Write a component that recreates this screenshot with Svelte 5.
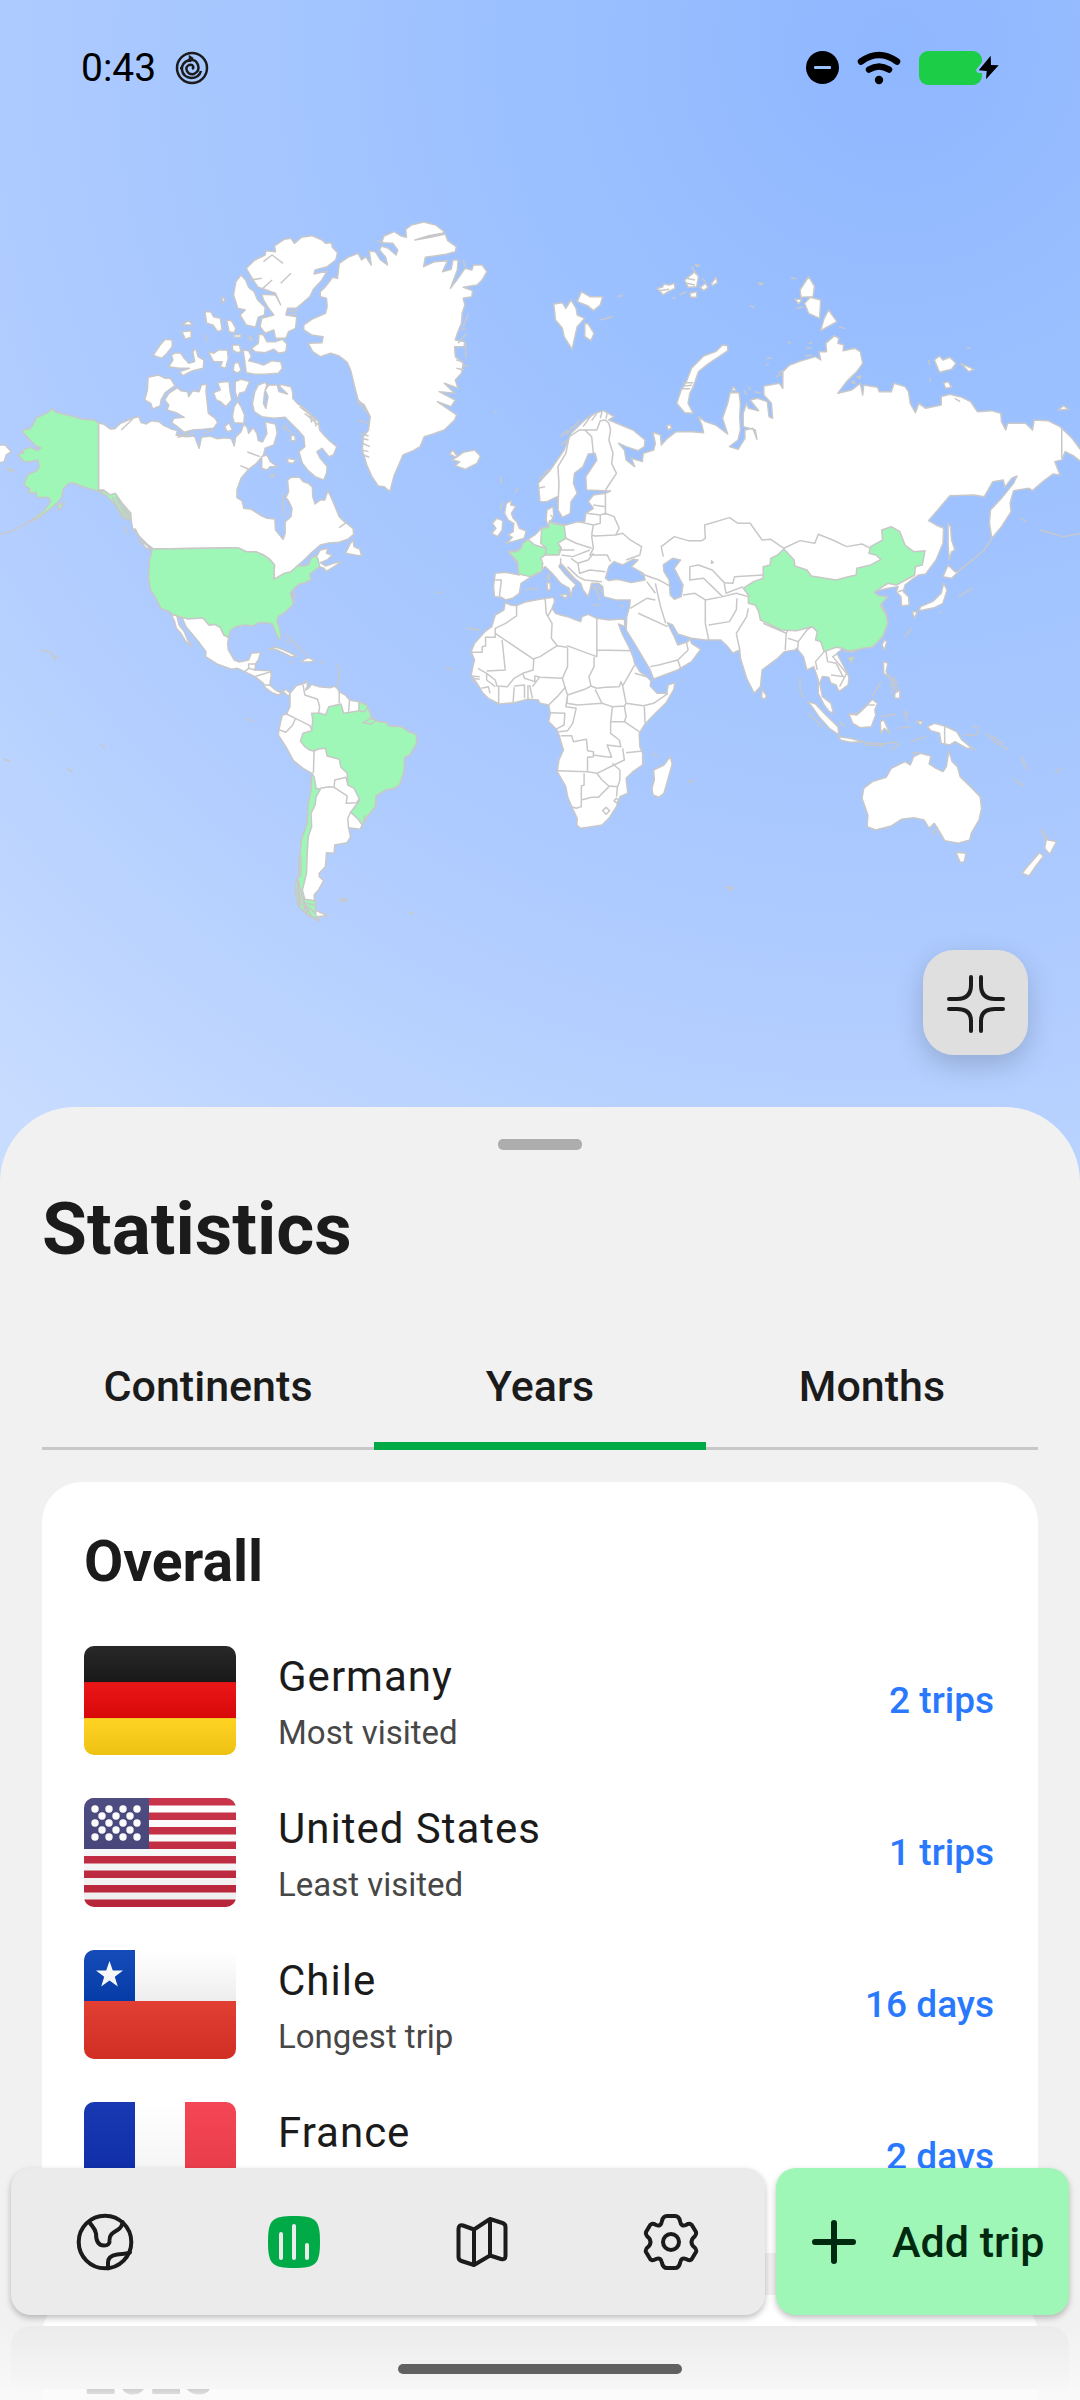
<script>
	const tabs = ['Continents', 'Years', 'Months'];
	let activeTab = 'Years';

	const overall = [
		{ code: 'de', country: 'Germany', label: 'Most visited', value: '2 trips' },
		{ code: 'us', country: 'United States', label: 'Least visited', value: '1 trips' },
		{ code: 'cl', country: 'Chile', label: 'Longest trip', value: '16 days' },
		{ code: 'fr', country: 'France', label: 'Shortest trip', value: '2 days' }
	];

	const usStars = [];
	for (let row = 0; row < 5; row++) {
		for (let col = 0; col < (row % 2 ? 3 : 4); col++) {
			usStars.push({ x: 11 + col * 14 + (row % 2 ? 7 : 0), y: 11 + row * 7 });
		}
	}

	// The map is split in four sheets, each with its own origin
	const sheets = [
		{
			x: 0, y: 0,
			land: [
				// Canada
				'M286 669L300 672 320 687 333 686 350 670 385 655 403 650 410 668 425 672 440 662 462 665 475 676 500 688 515 692 512 705 540 710 565 708 578 745 585 712 610 708 630 716 655 713 672 716 680 738 684 712 700 695 708 672 718 683 722 700 735 683 746 700 750 722 762 726 775 700 770 665 800 672 805 700 795 735 770 745 765 765 745 790 722 808 700 835 688 870 688 893 703 903 708 925 730 928 755 945 775 955 798 957 800 990 822 1018 828 1000 828 965 845 950 848 925 838 903 830 893 838 875 835 840 845 832 870 832 880 845 895 850 907 862 908 890 915 912 930 900 943 900 952 872 962 893 975 925 985 950 1000 965 1025 985 1027 1003 1010 1018 985 1027 955 1029 930 1035 905 1058 885 1078 863 1098 885 1098 897 1090 905 1075 920 1068 930 1050 952 1045 948 1060 965 1065 950 1080 930 1088 945 1098 975 1088 990 1085 970 1100 948 1114 940 1105 928 1100 885 1105 845 1120 795 1138 797 1095 783 1078 765 1065 742 1055 715 1055 690 1043 445 1047 430 1035 405 1010 385 985 378 945 345 905 320 885 300 870 286 869Z',
				// Arctic islands
				'M715 205L740 180 770 165 772 152 800 155 797 138 825 118 845 115 855 130 875 112 905 107 935 120 945 130 962 128 965 142 980 158 975 180 950 200 915 210 912 222 950 213 935 240 910 268 900 290 875 312 860 325 835 325 830 345 862 350 858 385 838 395 830 415 800 415 795 390 770 400 755 380 760 355 795 345 780 325 765 300 760 283 800 285 815 315 800 280 750 262 735 240Z',
				'M700 225L713 240 722 262 738 275 748 300 770 322 768 345 750 352 742 382 715 375 697 345 712 330 690 325 683 300 678 285 685 245Z',
				'M752 402L765 405 775 425 800 425 820 418 833 432 830 455 810 460 795 448 770 458 740 455 730 445 750 430Z',
				'M706 450L722 452 730 470 722 482 745 488 765 495 790 482 815 485 820 505 808 520 770 523 740 523 715 518Z',
				'M478 600L490 580 515 563 525 572 545 575 548 590 560 572 578 575 585 555 600 552 598 575 605 640 625 655 632 668 620 685 590 688 560 690 535 697 515 680 498 668 505 655 535 652 515 640 485 630 490 615Z',
				'M430 532L460 525 480 535 495 535 508 557 480 578 468 600 465 618 443 627 438 610 420 600 428 570Z',
				'M620 578L640 570 632 548 650 545 665 545 668 575 673 600 655 620 640 605 628 600Z',
				'M683 545L700 538 725 545 712 575 695 580 690 600 683 575Z',
				'M680 620L690 605 700 620 710 645 708 670 680 668 675 650Z',
				'M740 575L750 555 770 547 775 555 768 580 765 610 772 625 778 590 770 570 780 555 805 555 810 575 835 582 812 560 815 553 845 560 850 578 850 595 865 612 885 625 905 645 925 665 928 690 945 710 960 725 978 740 968 765 955 770 935 745 920 755 930 775 950 800 948 820 940 840 915 830 895 812 878 790 868 755 885 740 882 710 865 690 845 670 828 652 795 655 760 650 738 635 733 610Z',
				'M490 500L502 480 498 465 510 458 525 460 535 475 548 490 565 485 560 455 568 445 575 470 592 480 590 505 560 512 530 527 522 515 550 505 520 505Z',
				'M445 465L465 435 480 418 500 420 500 440 485 460 470 475 455 470Z',
				'M605 455L620 460 635 450 660 450 663 475 655 505 640 500 645 485 620 485Z',
				'M680 490L692 487 700 510 690 520 677 512Z M675 435L695 435 700 455 688 458 675 450Z M678 404H700V412H680Z M722 408L732 415 728 424Z',
				'M595 335L612 335 620 350 640 355 645 390 632 395 618 375 600 370Z M658 360L672 362 685 385 680 398 665 395Z',
				'M528 375L548 362 560 375Z M528 395L555 392 555 412 538 418Z M594 405L604 425Z M643 292L654 296 648 310Z',
				'M760 770L775 765 785 785 805 800 785 800 775 810 760 805Z M845 705L857 708 857 722 845 722Z M835 775L860 780 850 790 836 788Z M652 680L665 668 675 690 660 695Z M785 826L798 822 790 832Z',
				'M400 1018L425 1035 440 1050 425 1045Z M1003 1060L1015 1035 1025 1018 1028 1040 1045 1048 1050 1068 1030 1065Z',
				// Greenland
				'M985 190L1010 172 1040 160 1050 180 1062 170 1078 195 1072 152 1090 155 1105 180 1125 195 1120 172 1102 150 1108 138 1128 145 1150 165 1155 150 1140 130 1108 128 1115 108 1145 95 1165 108 1180 112 1178 88 1195 75 1230 66 1265 75 1290 95 1285 100 1245 107 1205 120 1250 112 1293 102 1300 122 1325 140 1322 155 1295 163 1235 172 1230 200 1262 185 1300 182 1285 215 1310 208 1315 180 1330 180 1328 210 1308 265 1330 235 1350 205 1370 210 1375 195 1400 195 1414 215 1400 240 1385 255 1345 262 1372 272 1370 290 1345 295 1350 315 1342 340 1340 370 1328 400 1322 420 1350 425 1347 440 1320 440 1322 470 1345 490 1340 520 1322 540 1330 565 1290 550 1320 580 1275 575 1322 600 1310 620 1270 605 1326 645 1320 660 1290 690 1255 703 1232 710 1220 740 1200 752 1170 765 1160 790 1145 825 1132 875 1115 860 1098 858 1080 830 1065 795 1052 750 1055 710 1070 690 1075 650 1060 620 1040 600 1032 570 1025 540 1018 510 1008 487 985 468 960 460 930 470 908 455 895 430 935 428 938 410 905 405 882 390 882 375 905 358 945 340 950 320 948 295 930 290 930 275 945 260 960 240 965 232 980 235Z',
				// Iceland, British Isles
				'M1305 762L1315 750 1328 770 1345 757 1378 750 1395 768 1385 790 1350 808 1322 797 1335 785 1312 780 1325 772Z',
				'M1470 910L1485 902 1483 915 1498 918 1485 940 1490 955 1500 965 1508 985 1528 993 1522 1015 1498 1022 1470 1030 1488 1012 1475 1005 1490 995 1492 970 1475 960 1465 940Z',
				'M1430 970L1442 955 1460 962 1458 990 1445 1010 1428 1000 1440 985Z',
				'M-5 735L15 735 33 755 18 765 12 785 -5 790Z'
			],
			visited: [
				// Alaska
				'M286 669L272 659 240 658 215 650 187 643 163 637 150 626 143 635 122 646 106 653 96 674 86 687 67 689 66 697 85 718 104 738 119 744 108 751 87 742 62 752 69 758 52 764 69 784 86 785 110 780 114 800 106 813 82 822 74 840 70 855 88 868 80 876 97 880 104 876 108 893 125 892 143 893 147 905 130 930 100 955 85 965 105 958 125 943 148 925 170 905 180 890 183 868 200 850 215 850 235 858 255 865 286 874 300 873 320 885 335 880 355 910 380 940 380 960 355 950 335 915 310 888 286 874Z',
				'M18 805L42 812 30 812Z M168 915L188 908 170 932Z'
			],
			lines: 'M0 1003L30 995 60 980 85 965 M325 890L355 955 M335 890L372 962 M345 900L378 958 M330 900L365 960 M340 895L380 950 M358 978L372 1002 M385 985L412 1020 M392 985L405 1012 M1042 610L1068 640 M1040 660L1066 670 M1035 605L1060 615 M1045 700L1070 708 M1050 715L1070 720 M1052 730L1074 740 M1050 750L1070 755 M1055 765L1072 772 M1345 180L1350 200 M1360 340L1345 380 M1340 390L1352 385 M1355 400L1330 430 M1352 430V475 M1325 480L1345 485 M1325 505L1348 510 M1345 495L1362 500 M1436 636L1442 630 M1455 832V850 M1505 862L1496 878 M1460 905L1452 930 M725 240L760 235 M760 268L790 240 M765 185L790 165 822 190 M815 250L845 220 M510 705L565 700 M515 712L545 706 M590 700L620 690 M870 620L888 634 M880 625L915 660 M885 640L925 675 M900 640L905 668 M912 650L918 680 M718 756L755 770 M698 797L722 808 M985 983L1005 968 M820 680L850 700 M830 670L828 690 M820 880L825 950 M1095 122L1115 128 M835 335L865 330 M838 345L862 340 M800 20M352 690L385 658'
		},
		{
			x: 540, y: 0,
			land: [
				// Europe and Asia, with the Black and Caspian seas cut out
				'M130 660L160 640 185 632 215 650 200 660 235 675 270 690 305 720 303 740 285 752 250 740 228 730 245 750 250 780 275 800 265 775 297 785 300 760 330 750 335 730 328 697 350 705 352 735 370 715 395 695 440 695 475 698 470 675 460 650 480 665 510 675 545 702 530 655 545 610 552 578 578 578 582 610 580 650 582 690 575 720 550 740 575 748 595 715 595 690 618 685 630 718 625 690 590 680 590 640 600 610 605 625 635 632 610 600 632 595 660 605 665 650 675 655 672 610 650 585 650 558 695 550 705 565 705 515 725 495 760 482 800 470 815 480 810 455 832 455 830 430 855 407 868 415 865 430 882 435 880 452 915 445 930 455 937 490 920 515 890 545 865 580 905 570 930 550 937 585 940 555 980 562 985 575 1020 575 1028 550 1060 560 1070 575 1075 610 1090 638 1100 610 1120 625 1165 615 1165 590 1190 583 1225 592 1250 605 1270 635 1310 632 1338 640 1340 665 1352 690 1358 670 1410 670 1430 690 1435 660 1475 662 1510 680 1545 715 1570 750 1570 785 1550 768 1525 755 1515 780 1495 785 1510 825 1490 822 1460 845 1430 872 1420 865 1375 872 1365 910 1368 935 1340 980 1312 1015 1305 970 1308 930 1340 895 1375 850 1385 828 1370 835 1350 862 1345 840 1315 845 1290 890 1260 885 1190 887 1155 930 1128 962 1150 975 1172 985 1170 1030 1150 1080 1120 1122 1100 1125 1078 1140 1060 1155 1055 1175 1070 1190 1072 1215 1050 1218 1048 1190 1035 1175 1040 1160 1010 1165 970 1175 985 1190 1010 1190 990 1210 1005 1240 1010 1270 995 1310 965 1340 935 1345 905 1355 880 1345 862 1360 880 1395 897 1430 895 1455 868 1475 860 1455 845 1450 838 1432 820 1430 812 1450 820 1490 845 1510 852 1540 840 1535 825 1515 808 1480 808 1440 795 1400 775 1410 765 1370 745 1345 740 1350 710 1355 690 1375 645 1410 640 1460 622 1480 600 1435 582 1375 580 1350 560 1360 545 1340 525 1320 480 1320 440 1315 400 1302 385 1275 370 1268 380 1290 390 1310 400 1335 430 1325 435 1315 440 1330 467 1348 440 1385 400 1410 330 1437 320 1410 280 1340 250 1290 252 1250 260 1220 262 1200 220 1200 185 1190 182 1160 170 1150 150 1150 140 1190 125 1170 118 1150 100 1135 80 1112 60 1090 55 1100 75 1125 105 1155 95 1165 90 1190 85 1165 60 1150 35 1120 15 1100 -5 1120 -25 1130 -55 1150 -60 1180 -80 1195 -100 1200 -112 1192 -132 1190 -135 1160 -130 1120 -100 1117 -60 1125 -65 1090 -93 1055 -68 1052 -55 1045 -50 1030 -35 1018 -15 1005 5 985 25 980 18 960 20 930 38 920 40 950 30 965 55 972 75 975 110 965 130 965 133 940 155 925 140 905 155 885 190 880 205 873 135 870 133 830 165 780 160 760 140 762 125 800 100 820 97 850 108 880 90 905 88 940 65 952 52 930 50 890 20 905 0 905 -5 850 30 810 70 750 90 700Z M190 1135L200 1100 215 1085 240 1095 270 1078 285 1080 265 1100 300 1120 305 1140 265 1148 225 1138 200 1142Z M358 1095L385 1075 408 1080 390 1105 405 1135 415 1155 410 1190 390 1198 378 1185 375 1140 360 1115Z',
				'M545 437L545 452 520 470 490 490 460 515 445 560 435 580 430 610 445 640 420 638 397 610 410 570 425 545 440 505 475 468 510 455 530 435Z',
				'M40 312L65 308 75 325 90 300 105 325 108 345 130 355 108 380 93 448 70 410 65 385 45 360Z',
				'M108 305L120 275 145 290 182 290 175 315 155 332 140 318Z M130 370L140 372 157 400 148 422 130 410Z',
				'M755 270L780 230 797 258 793 290 758 292Z M768 310L785 292 815 300 812 355 780 340Z M838 330L862 365 815 392 825 355Z M740 298H760L752 312Z',
				'M340 265L355 262 360 252 375 255 390 250 392 265 372 275 358 285Z M420 240L450 215 460 230 455 260 430 262Z M465 262L480 250 488 262 475 272Z M498 250L512 232 515 248 500 258Z M435 280L455 275 455 292 438 292Z M451 194L463 196 456 200Z M635 249L647 250 640 255Z M730 234L743 236Z',
				'M1145 480L1160 468 1170 480 1190 472 1208 490 1195 508 1160 517Z M1222 490L1260 508 1245 515Z M1172 550L1185 545 1195 562 1178 565Z M1505 630L1520 617 1535 628Z',
				'M368 678L378 674 382 684 372 690Z M556 572L562 560 570 572Z M905 548L912 542 914 550Z M920 530L932 528 928 536Z',
				'M1185 970L1192 980 1195 1020 1205 1050 1195 1055 1188 1080 1185 1030Z',
				'M20 1150L28 1150 27 1170 21 1168Z M58 1185L80 1183 76 1195Z'
			],
			visited: [
				'M5 985L25 982 28 962 40 972 70 975 75 1015 52 1030 62 1045 55 1065 15 1065 18 1045 2 1030Z',
				'M-93 1055L-68 1055 -55 1045 -50 1030 -35 1018 -15 1035 18 1045 15 1065 2 1075 8 1090 5 1115 -8 1120 -28 1130 -62 1122 -65 1085Z',
				'M23 1125L27 1122 27 1140 23 1138Z'
			],
			lines: 'M52 930L55 850 52 800 75 760 85 710 115 690 130 690 150 710 155 760 M130 690L165 690 175 662 190 660 200 670 205 690 200 720 212 760 208 790 222 820 190 870 M190 880V945 M155 915L190 920 M135 940L175 945 190 940 215 950 230 985 220 1005 160 1008 150 1005 155 975 175 970 175 945 M110 965L155 975 M220 1005L240 1000 262 1020 295 1040 290 1065 250 1080 M150 1008L155 1045 145 1065 195 1065 205 1085 M75 1015L105 1030 150 1045 M52 1050H100 M62 1065L95 1070 145 1050 M90 1075L110 1090 140 1080 155 1060 M110 1090L115 1120 145 1110 190 1115 M60 1075V1095 M80 1100L110 1130 130 1140 180 1145 M358 1070L352 1040 390 1010 430 1022 470 1022 480 1015 478 975 550 953 575 970 610 970 645 1020 670 1018 708 1045 755 1022 798 1030 808 1003 850 1020 890 1040 935 1032 960 1045 M648 1125L565 1130 560 1150 535 1148 500 1110 460 1095 435 1100V1140L475 1135 530 1190 M415 1185L450 1180 480 1200V1270L490 1320 M480 1200L530 1190 570 1180 605 1190 M490 1275L550 1265 570 1230 572 1195 M605 1225L600 1250 570 1300 580 1350 M535 1150L540 1180 590 1160 M335 1150L350 1220 365 1270 M262 1225L310 1195 335 1200 M285 1240L370 1280 M320 1400L345 1395 400 1380 430 1350 425 1325 M400 1380L410 1410 M290 1120L345 1140 380 1160 M310 1145L335 1180 M648 1270L715 1300 720 1290H750 M715 1300L712 1350 M720 1315L750 1325 748 1350 M750 1325L775 1290 790 1280 M825 1355L800 1385 805 1410 M830 1350L835 1385 860 1390 880 1430 845 1425 M865 1360L850 1370 890 1420 870 1460 M-130 1140L-112 1140 -118 1190 M1515 685V775 M1312 1015L1290 1050 1250 1085 1212 1115 M1395 955L1412 965 M1450 990L1520 1010 1570 1000 M80 690L60 710 M95 680L75 705 M115 660L95 685 M150 645L125 680 M165 640L150 662 M180 636L175 655 M195 638L192 656 M60 735L78 722 M10 820L28 808 M-5 835L15 825 M-5 865L15 860 M690 520L705 512 M685 530L702 524 M658 475H672 M656 495L664 492 M780 430H790 M775 445H788 M770 468L790 466 M720 425L728 430 M745 325L765 320 M868 380L885 386 M225 290L240 286 M175 360L210 350 M610 318L622 322 M470 235L480 245 M440 200L455 225 M425 235L450 240 M425 250L450 255 M405 285L425 275 M385 290L392 298 M345 272L375 268 M415 548L445 548 M418 558L442 556 M408 566L436 566 M592 570L600 585 M605 560L612 570 M622 575L640 580 M1130 480V495 M1130 535L1134 545 M1240 445H1250 M1205 595L1220 605 M160 1160L175 1200 M155 1215H175 M150 1155L170 1180 M165 1155L182 1178 M230 1218H243 M-5 1170L-18 1165 M65 1095L100 1140 M30 945L42 955 M498 1082L503 1088 498 1090Z'
		},
		{
			x: 0, y: 360,
			land: [
				// Mexico and Central America
				'M497 163L520 168 545 176 590 174 607 195 625 193 640 203 650 225 664 232 661 250 663 270 680 300 695 306 722 300 730 280 757 277 750 300 742 312 740 330 785 332 788 345 783 375 800 390 815 398 830 388 842 400 838 410 825 397 808 405 790 398 770 383 765 370 740 350 710 335 690 325 672 328 630 312 597 290 598 275 580 250 560 225 540 200 528 172 514 170 520 195 535 215 545 240 558 260 540 245 525 220 512 205 507 185Z',
				'M780 268L800 261 825 270 862 288 845 290 820 277 800 268Z M880 300L895 293 915 302 900 306 878 305Z M930 306H942',
				// South America
				'M842 400L860 377 885 370 890 360 893 378 887 390 895 385 905 373 925 380 960 383 975 378 985 395 1003 405 1015 420 1042 425 1065 435 1075 460 1078 475 1100 485 1120 487 1130 498 1165 500 1190 517 1208 523 1210 550 1190 585 1175 592 1173 635 1160 675 1145 685 1120 690 1092 708 1090 740 1070 765 1052 795 1045 808 1012 803 1018 830 1008 848 972 855 970 880 948 878 945 920 927 940 927 950 940 962 925 990 912 1005 915 1050 950 1067 920 1070 925 1080 895 1065 868 1040 860 1010 858 970 868 950 870 900 875 840 892 790 895 730 903 690 905 640 880 625 852 602 830 560 808 525 810 510 815 485 820 465 832 462 842 440Z'
			],
			visited: [
				// United States
				'M440 -33H445L690 -37 715 -25 742 -25 765 -15 783 -2 797 15 795 58 825 40 845 35 863 18 885 18 897 12 905 -8 915 -12 923 -5 928 20 915 30 900 42 903 60 885 68 868 73 855 85 843 100 850 120 850 135 830 155 808 170 804 185 812 205 816 233 810 238 800 215 792 193 775 188 750 188 735 198 710 195 685 200 668 213 664 232 650 225 640 203 625 193 607 195 590 174 545 176 520 170 500 163 492 155 467 145 460 130 447 105 437 90 431 52 434 0 440 -20Z',
				'M155 290L165 292 160 298Z',
				// Brazil
				'M905 460L930 460 945 465 955 440 990 432 998 460 1042 452 1042 425 1065 435 1075 460 1078 475 1100 485 1120 487 1130 498 1165 500 1190 517 1208 523 1210 550 1190 585 1175 592 1173 635 1160 675 1145 685 1120 690 1092 708 1090 740 1070 765 1052 795 1040 778 1018 757 1045 720 1028 685 1010 675 1008 640 990 622 985 598 950 588 945 565 925 567 912 573 898 570 885 560 872 543 880 520 905 512 908 480Z',
				// Chile
				'M905 640L912 650 918 685 930 688 918 710 915 735 903 760 905 800 895 830 892 880 890 940 878 990 885 1018 915 1022 917 1068 920 1070 925 1080 895 1065 868 1040 860 1010 858 970 868 950 870 900 875 840 892 790 895 730 903 690Z'
			],
			lines: 'M880 375L885 405 922 418 928 440 925 460 M832 462L858 475 900 497 905 510 M858 475L850 495 830 517 812 510 M912 573L910 640 M985 395V430 M1015 420L1012 455 M930 685L955 680 970 682 972 660 1005 652 1010 675 M970 682L1008 708 1005 730 1035 728 1045 715 M1018 757L1010 775 1012 803 M722 325V312H742 M710 335L722 325 742 330 M740 350L755 345 787 335 M768 375H783 M1042 452L1058 455 1070 440 M1055 488L1075 475 1092 480 1080 492Z M118 270L130 272 150 280 160 292 M830 222L850 245 875 270 890 285 M832 240L840 250 M975 310L985 330 985 360 975 385 M835 307H848 M715 478L735 482 M985 1018L1010 1018 995 1026Z M1185 1055L1202 1063 M868 890V950 M874 890V950 M862 960L875 1040 M866 960L885 1050 M870 985L895 1055 M862 985L870 1035 M874 1000L892 1060 M878 1020L905 1070 M884 1025L900 1062 M895 1040L915 1060 M890 1030L912 1035 M885 1060L930 1083 M848 90L860 110 M846 110L856 130 M852 88L852 130 M1265 96L1280 98 M1355 205L1395 210 M1295 320L1312 330 M10 598L30 603 M195 626L212 636 M292 553L305 566 M140 457H144 M560 727V729 M1525 90L1548 84 M1060 765L1055 790 M1368 345L1390 350 M1370 350L1395 356 M1370 362L1385 366'
		},
		{
			x: 540, y: 360,
			land: [
				// Africa
				'M-101 128L-85 135 -68 137 -40 125 0 118 20 115 40 112 42 125 35 145 45 160 60 165 80 170 105 180 118 185 122 170 140 163 165 175 200 180 225 178 245 178 247 200 228 192 240 225 258 260 270 290 275 310 290 335 310 350 322 362 320 378 340 400 368 400 372 375 392 368 388 390 365 430 335 460 305 492 288 520 290 560 298 580 298 615 270 635 250 655 255 700 232 710 222 740 200 775 180 795 150 800 118 805 107 795 108 775 92 740 80 710 75 680 50 635 55 600 68 570 55 525 50 510 25 485 30 460 25 435 0 430 -5 420 -35 418 -75 428 -118 432 -150 415 -165 400 -180 375 -200 345 -195 320 -190 300 -200 275 -190 250 -160 215 -140 200 -130 165 -105 150Z',
				'M378 590L384 612 375 645 360 700 345 712 328 705 325 685 332 660 330 630 360 615Z',
				// Japan, Taiwan, Philippines, Sri Lanka
				'M1185 15L1205 35 1215 35 1195 55 1170 50Z M1172 70L1182 90 1170 130 1145 143 1100 152 1105 140 1140 125 1165 100Z M1080 155L1095 155 1088 175Z',
				'M1000 240L1007 245 1000 270 993 255Z M997 305L1010 310 1005 335 1012 350 998 340Z M1030 400L1045 390 1045 415 1030 415Z M645 388L658 408 652 418 643 412Z',
				// Indonesia and New Guinea
				'M778 425L800 432 830 465 865 500 868 525 840 505 810 470 790 440Z M868 530L900 535 940 545 900 547 872 540Z',
				'M897 462L920 465 945 440 965 418 980 430 972 450 975 465 962 500 930 503 908 490Z M988 485L998 480 1005 495 1015 520 1000 505 990 520Z M1092 482L1112 485 1105 495Z',
				'M1125 500L1145 490 1175 498 1210 515 1225 540 1255 565 1240 565 1205 545 1190 555 1165 550 1160 520 1135 512Z',
				// Australia, New Zealand
				'M1187 573L1197 605 1212 620 1220 650 1250 680 1278 710 1282 745 1275 780 1252 820 1248 840 1215 850 1175 842 1160 815 1145 790 1130 805 1115 780 1085 773 1050 778 1020 798 975 810 950 800 952 765 935 715 940 685 965 665 1005 652 1020 625 1060 605 1075 615 1085 590 1105 580 1135 588 1130 612 1150 625 1170 635 1180 620Z',
				'M1208 877L1237 880 1232 905 1220 908Z M1455 808L1475 840 1500 845 1480 883 1465 865 1470 840Z M1450 878L1462 888 1435 925 1420 948 1400 940 1415 920Z',
				'M20 68L30 68 30 88 22 92Z'
			],
			visited: [
				// China
				'M648 20L668 15 670 -5 690 -15 708 -33 738 0 740 18 775 30 788 48 860 60 895 50 918 45 920 25 960 15 990 -2 975 -15 955 -20 960 -40 995 -60 992 -90 1020 -100 1045 -85 1060 -45 1085 -25 1118 -28 1110 15 1090 20 1088 45 1035 75 1010 70 970 97 985 107 1010 110 988 135 1005 165 1010 190 995 230 965 262 935 265 905 277 878 265 860 262 825 275 815 245 800 240 805 215 790 200 745 212 700 210 640 180 635 155 625 135 605 130 605 105 590 85 620 65 648 55Z',
				'M895 293L912 292 903 307Z'
			],
			lines: 'M-200 277L-168 277V260L-158 258V232H-130V205L-100 190 -68 168V137 M-130 220L-20 297 0 290 50 257 78 262 M-110 240L-101 330 -155 333 M-18 298L-20 330 -50 340 -75 355 -95 380 -125 378 -130 360 -155 340 -180 325 M-50 340L-45 355 -15 365V348L0 352 65 355 80 320V262 M15 115L18 160 35 190 33 235 50 257 M35 145L22 170 M165 175V290L78 257 M157 290V320L142 350 148 378 130 388 80 405 72 380 65 355 M165 270L270 272 M148 378L165 385 190 382 230 380 235 365 240 378 250 360 275 315 M275 340L310 350 M240 378L250 430 300 437 330 430 372 400 M160 388L180 430 210 440 245 438 250 430 M80 405L78 430 110 435 180 430 M80 405L75 440 105 445 95 490 80 512 55 515 M30 458L72 460 70 495 45 508 M60 527H92L97 545 135 538 138 572 155 575V590L138 592V635L50 632 M155 585L190 590 208 592 195 555 235 560 230 540 205 520V490L210 440 M205 485H245L250 470 245 438 M245 485L288 515 M303 440L305 490 M240 565L245 600 215 615 210 610 M250 578L298 573 M138 635L165 640 215 615 232 630V660L225 680 200 678 180 660 165 640 M128 640V675L120 678V740L105 745 92 740 M120 720L150 712 170 712 200 680 M225 680L222 710 M182 752L192 742 202 752 192 763Z M215 722L222 715 229 722 222 729Z M-75 382L-78 428 M-75 378L-45 375V415 M-35 375V418 M-30 375L-22 415 M-22 380L0 350 M-120 380V432 M-155 340V360L-130 380 M25 435L50 410 75 380 M-170 385L-150 380 -145 400 M-200 348L-175 350 M-198 355L-175 358 M1175 498V553 M900 462L925 460 950 435 972 435 M1040 95L1062 88 M940 548L1000 552 1040 545 M945 555L1000 558 M1015 572L1045 552 M990 470L1035 463 M1060 450L1065 485 M1055 462L1072 460 M1040 505L1075 500 M1075 545L1120 530 M755 350V390L765 415 M780 460L820 502 M965 410L990 365 M1010 345L1040 370 M1012 355L1042 385 M1015 370L1040 395 M1030 350L1020 400 M1230 525L1265 525 1278 510 M1255 498L1275 505 M1255 565L1265 570 M1295 520L1320 545 1360 570 M1310 525L1345 552 M1398 590L1415 630 M1400 610L1410 612 M1375 658L1405 678 M1495 638L1515 625 M1060 230L1080 205 M1215 110L1255 85 M325 580L342 590 M430 668L448 660 M545 980L560 985 550 990Z M1140 820L1155 800 M1140 812L1150 825 M1080 578H1100 M870 485L885 500 M412 360L420 360 M880 275L930 268 M1160 155L1165 158'
		}
	];
</script>

<div class="app">
	<header class="status-bar">
		<span class="clock">0:43</span>
		<svg class="spiral" width="34" height="34" viewBox="0 0 34 34">
			<circle cx="17" cy="17" r="15" />
			<path d="M17 18q2-1 1-3t-4-1q-4 2-2 6t7 3q6-3 4-9t-9-5q-8 3-7 10t9 8q8 0 10-7M8 17h-3M15 11V6l3 2" />
		</svg>
		<div class="status-icons">
			<svg class="dnd" width="33" height="33" viewBox="0 0 33 33">
				<circle cx="16.500" cy="16.500" r="16.500" />
				<rect x="8" y="15" width="17" height="3" rx="1" />
			</svg>
			<svg class="wifi" width="44" height="34" viewBox="0 0 44 34">
				<path d="M4 10.500Q22-2.500 40 10.500M12 18.500Q22 12.500 32 18.500" />
				<circle cx="22" cy="29" r="4.200" />
			</svg>
			<svg class="battery" width="82" height="34" viewBox="0 0 82 34">
				<rect width="63" height="34" rx="9" />
				<path d="M71.700 4.700L59.700 19.300 67.700 20 67 28.300 79.700 14.300 72 14Z" />
			</svg>
		</div>
	</header>

	<svg class="world" viewBox="0 0 1080 740" role="img" aria-label="World map">
		{#each sheets as sheet}
			<g transform="translate({sheet.x} {sheet.y}) scale(0.3444 0.3333)">
				{#each sheet.land as d}
					<path {d} />
				{/each}
				{#each sheet.visited as d}
					<path class="visited" {d} />
				{/each}
				<path class="border" d={sheet.lines} />
			</g>
		{/each}
	</svg>

	<div class="map-tools">
		<button class="collapse" aria-label="Collapse map">
			<svg width="60" height="60" viewBox="0 0 60 60">
				<path d="M25 4v8q0 14-14 14H3M35 4v8q0 14 14 14h8M25 58V48q0-12-14-12H3M35 58V48q0-12 14-12h8" />
			</svg>
		</button>
	</div>

	<main class="sheet">
		<div class="handle"></div>
		<h1>Statistics</h1>

		<div class="tabs" role="tablist">
			{#each tabs as tab}
				<button
					class="tab"
					class:active={tab === activeTab}
					role="tab"
					aria-selected={tab === activeTab}
					on:click={() => (activeTab = tab)}
				>{tab}</button>
			{/each}
		</div>

		<section class="card">
			<h2>Overall</h2>
			<ul>
				{#each overall as item}
					<li>
						<svg class="flag" width="152" height="109" viewBox="0 0 152 109">
							<defs>
								<linearGradient id="shade-{item.code}" x2="0" y2="1">
									<stop offset="0" stop-color="#fff" stop-opacity=".06" />
									<stop offset="1" stop-color="#000" stop-opacity=".07" />
								</linearGradient>
							</defs>
							{#if item.code === 'de'}
								<rect width="152" height="36" fill="#1a1a1a" />
								<rect y="36" width="152" height="36" fill="#e80808" />
								<rect y="72" width="152" height="37" fill="#ffd014" />
								{#each [0, 36, 72] as y}
									<rect {y} width="152" height="37" fill="url(#shade-de)" />
								{/each}
							{:else if item.code === 'us'}
								<rect width="152" height="109" fill="#fff" />
								{#each [0, 1, 2, 3, 4, 5, 6, 7] as stripe}
									<rect y={stripe * 14.5} width="152" height="7.500" fill="#c5283f" />
								{/each}
								<rect width="65" height="51" fill="#42427a" />
								{#each usStars as star}
									<circle cx={star.x} cy={star.y} r="3.700" fill="#fff" />
								{/each}
								<rect width="152" height="109" fill="url(#shade-us)" />
							{:else if item.code === 'cl'}
								<rect width="152" height="51" fill="#fff" />
								<rect width="51" height="51" fill="#0640b4" />
								<rect y="51" width="152" height="58" fill="#e03226" />
								<path d="M25.500 11l3.300 9.600h10.200l-8.200 6.100 3 9.800-8.300-5.900-8.300 5.900 3-9.800-8.200-6.100h10.200z" fill="#fff" />
								<rect width="152" height="51" fill="url(#shade-cl)" />
								<rect y="51" width="152" height="58" fill="url(#shade-cl)" />
							{:else}
								<rect width="51" height="109" fill="#0a2cae" />
								<rect x="51" width="51" height="109" fill="#fff" />
								<rect x="101" width="51" height="109" fill="#f33a4a" />
								<rect width="152" height="109" fill="url(#shade-fr)" />
							{/if}
						</svg>
						<div class="names">
							<span class="country">{item.country}</span>
							<span class="label">{item.label}</span>
						</div>
						<span class="value">{item.value}</span>
					</li>
				{/each}
			</ul>
		</section>

		<section class="card">
			<h2>2025</h2>
		</section>
	</main>

	<div class="dock">
		<div class="dock-row">
			<nav>
				<a href="#globe" aria-label="Globe">
					<svg width="60" height="60" viewBox="0 0 60 60">
						<circle cx="30" cy="30" r="26.300" />
						<path d="M14 9.500c2 4 6 6 7 12 0 5 1 12 8 12 4 0 6-2 5.500-5-.5-6 4-8 8-10.500 3-2 5-4 5-8M55 40.500c-5 2-8 1-13 2-6 1-9 4-9 8v6" />
					</svg>
				</a>
				<a href="#statistics" aria-label="Statistics">
					<svg width="60" height="60" viewBox="0 0 60 60">
						<path class="tile" d="M30 4c22 0 26 4 26 26s-4 26-26 26S4 52 4 30 8 4 30 4z" />
						<path class="bars" d="M17 22v24M30 14v32M43 33v13" />
					</svg>
				</a>
				<a href="#map" aria-label="Map">
					<svg width="60" height="60" viewBox="0 0 60 60">
						<path d="M22 17.500L11 13.500q-4.500-1-4.500 3.500v28q0 3 3 4l12.500 4 16-9.500 11 3.500q4.500 1 4.500-3V15q0-3-3-4L38 7zM22 17.500V53M38 7v36.500" />
					</svg>
				</a>
				<a href="#settings" aria-label="Settings">
					<svg width="60" height="60" viewBox="-30 -30 60 60">
						<path d="M-4-26H4Q8-26 9-21 10-15 15-17 20-20 22-15L25-10Q26-7 22-4 19 0 22 4 26 7 25 10L22 15Q20 20 15 17 10 15 9 21 8 26 4 26H-4Q-8 26-9 21-10 15-15 17-20 20-22 15L-25 10Q-26 7-22 4-19 0-22-4-26-7-25-10L-22-15Q-20-20-15-17-10-15-9-21-8-26-4-26z" />
						<circle r="8" />
					</svg>
				</a>
			</nav>
			<button class="add">
				<svg width="44" height="44" viewBox="0 0 44 44">
					<path d="M3 22h38M22 3v38" />
				</svg>
				Add trip
			</button>
		</div>
		<div class="dock-base"></div>
	</div>
	<div class="scrim">
		<div class="home"></div>
	</div>
</div>

<style>
	:global(body) {
		margin: 0;
	}

	.app {
		position: relative;
		display: flex;
		flex-direction: column;
		height: 100vh;
		overflow: hidden;
		font-family: Roboto, sans-serif;
		color: #1b1b1b;
		background: radial-gradient(circle at 83% 50px, #8fb7ff 0, #9bc0ff 360px, #aecbff 900px, #bdd5ff 1200px, #c8dcff 1380px);
	}

	h1, h2, ul {
		margin: 0;
		padding: 0;
	}

	button {
		border: none;
		font-family: inherit;
		color: inherit;
		cursor: pointer;
	}

	.status-bar {
		display: flex;
		flex: none;
		align-items: center;
		height: 136px;
		padding: 0 79px 0 81px;
		color: #000;
	}

	.clock {
		font-size: 39px;
	}

	.spiral {
		margin-left: 19px;
		fill: none;
		stroke: #1b1b1b;
		stroke-width: 2.5;
	}

	.status-icons {
		display: flex;
		gap: 18px;
		margin-left: auto;
	}

	.dnd rect {
		fill: #9bc0ff;
	}

	.wifi path {
		fill: none;
		stroke: #000;
		stroke-width: 6.5;
		stroke-linecap: round;
	}

	.battery {
		overflow: visible;
	}

	.battery rect {
		fill: #1ccd47;
	}

	.battery path {
		stroke: #94bbff;
		stroke-width: 5;
		stroke-linejoin: round;
		paint-order: stroke;
	}

	.world {
		flex: none;
		width: 100%;
		margin-top: 64px;
	}

	.world path {
		fill: #fff;
		fill-rule: evenodd;
		stroke: #c8c8c8;
		stroke-width: 1.5;
		stroke-linejoin: round;
		vector-effect: non-scaling-stroke;
	}

	.world .visited {
		fill: #9ef7b6;
	}

	.world .border {
		fill: none;
	}

	.map-tools {
		display: flex;
		flex: none;
		justify-content: flex-end;
		padding: 10px 52px 52px;
	}

	.collapse {
		display: grid;
		place-items: center;
		width: 105px;
		height: 105px;
		padding: 0;
		border-radius: 31px;
		background: #dfdfdf;
		box-shadow: 0 10px 28px rgba(0, 0, 0, .18);
	}

	.collapse path {
		fill: none;
		stroke: #1b1b1b;
		stroke-width: 4;
		stroke-linecap: round;
	}

	.sheet {
		flex: 1;
		min-height: 0;
		padding: 32px 42px 0;
		border-radius: 75px 75px 0 0;
		overflow: hidden;
		background: #f1f1f1;
	}

	.handle {
		width: 84px;
		height: 11px;
		margin: 0 auto;
		border-radius: 5px;
		background: #adadad;
	}

	h1 {
		margin-top: 37px;
		font-size: 73px;
		line-height: 84px;
	}

	.tabs {
		display: grid;
		grid-template-columns: repeat(3, 1fr);
		margin-top: 53px;
		box-shadow: inset 0 -3px #c8c8c8;
	}

	.tab {
		height: 126px;
		padding: 6px 0 0;
		border-bottom: 8px solid transparent;
		background: none;
		font-size: 43px;
		font-weight: 500;
	}

	.tab.active {
		border-color: #00aa46;
	}

	.card {
		margin-top: 32px;
		padding: 43px 42px 42px;
		border-radius: 40px;
		background: #fff;
	}

	.card + .card {
		margin-top: 42px;
		height: 300px;
	}

	h2 {
		font-size: 57px;
		line-height: 74px;
	}

	ul {
		display: grid;
		gap: 43px;
		margin-top: 47px;
		list-style: none;
	}

	li {
		display: flex;
		align-items: center;
		height: 109px;
	}

	.flag {
		border-radius: 10px;
	}

	.names {
		display: flex;
		flex-direction: column;
		gap: 8px;
		flex: 1;
		margin-left: 42px;
		padding-top: 3px;
	}

	.country {
		font-size: 42px;
		line-height: 54px;
		letter-spacing: 1px;
	}

	.label {
		font-size: 33px;
		line-height: 42px;
		color: #474747;
	}

	.value {
		padding-right: 2px;
		font-size: 37px;
		font-weight: 500;
		color: #2979ff;
	}

	.dock {
		position: absolute;
		right: 11px;
		bottom: 11px;
		left: 11px;
	}

	.dock-row {
		display: flex;
		gap: 11px;
		height: 147px;
	}

	nav {
		display: grid;
		grid-template-columns: repeat(4, 1fr);
		flex: 1;
		border-radius: 20px;
		background: #ebebeb;
		box-shadow: 0 3px 6px rgba(0, 0, 0, .25);
	}

	nav a {
		display: grid;
		place-items: center;
	}

	nav path,
	nav circle {
		fill: none;
		stroke: #1b1b1b;
		stroke-width: 4;
		stroke-linecap: round;
		stroke-linejoin: round;
	}

	nav .tile {
		fill: #00aa46;
		stroke: none;
	}

	nav .bars {
		stroke: #ebebeb;
	}

	.add {
		display: flex;
		align-items: center;
		gap: 36px;
		width: 293px;
		padding: 0 0 0 36px;
		border-radius: 20px;
		background: #9ef7b6;
		box-shadow: 0 3px 6px rgba(0, 0, 0, .25);
		font-size: 43px;
		font-weight: 500;
		color: #002a10;
		white-space: nowrap;
	}

	.add path {
		stroke: #002a10;
		stroke-width: 6;
		stroke-linecap: round;
	}

	.dock-base {
		height: 63px;
		margin-top: 11px;
		border-radius: 20px 20px 0 0;
		background: #ebebeb;
	}

	.scrim {
		position: absolute;
		right: 0;
		bottom: 0;
		left: 0;
		display: flex;
		align-items: flex-end;
		justify-content: center;
		height: 74px;
		background: linear-gradient(rgba(250, 250, 250, 0), rgba(250, 250, 250, .95));
		pointer-events: none;
	}

	.home {
		width: 284px;
		height: 10px;
		margin-bottom: 26px;
		border-radius: 5px;
		background: #616161;
	}
</style>
